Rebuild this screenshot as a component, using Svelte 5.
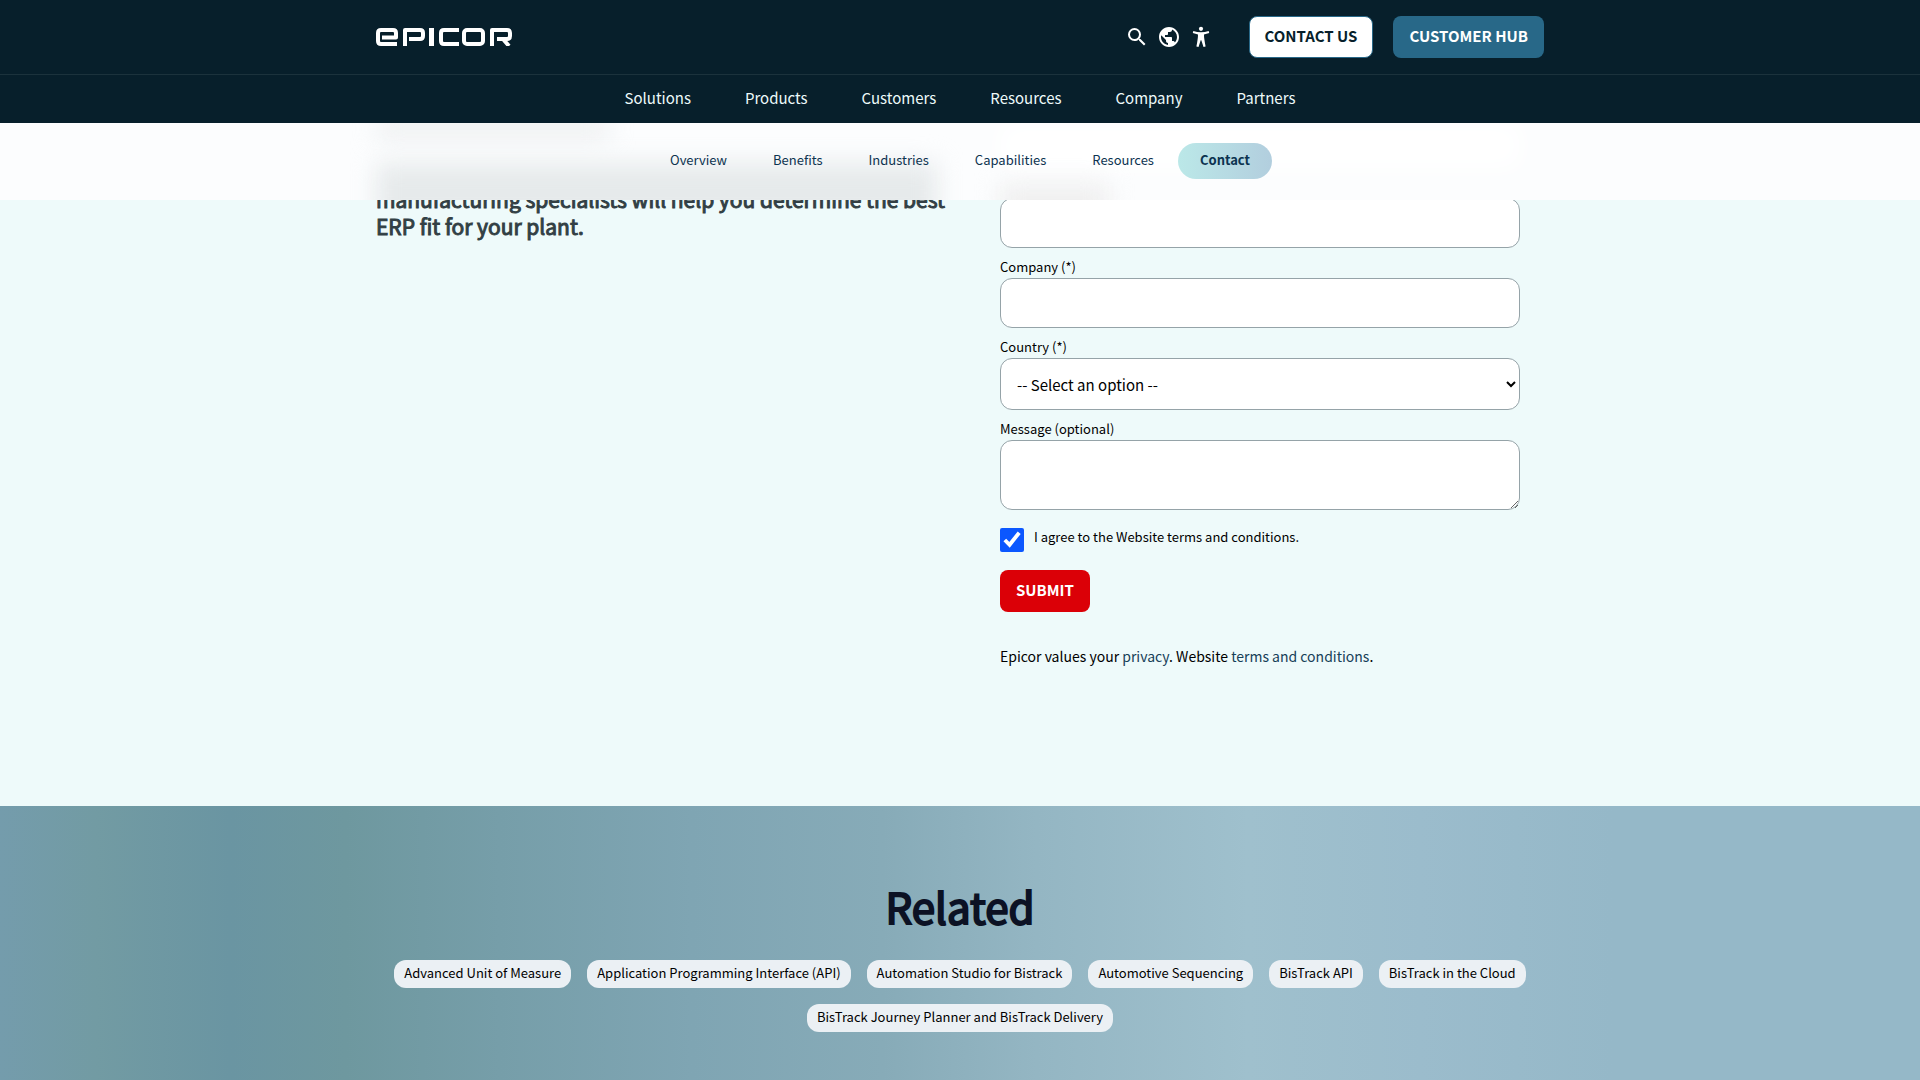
<script>
  const mainLinks = ['Solutions', 'Products', 'Customers', 'Resources', 'Company', 'Partners'];
  const pageLinks = ['Overview', 'Benefits', 'Industries', 'Capabilities', 'Resources', 'Contact'];
  const tags = [
    'Advanced Unit of Measure',
    'Application Programming Interface (API)',
    'Automation Studio for Bistrack',
    'Automotive Sequencing',
    'BisTrack API',
    'BisTrack in the Cloud',
    'BisTrack Journey Planner and BisTrack Delivery'
  ];
  let agreed = $state(true);
</script>

<header class="top">
  <div class="masthead">
    <div class="container bar">
      <a class="logo" href="#home" aria-label="Epicor">
        <svg viewBox="0 0 136 18" width="136" height="18" fill="none" stroke="#fff" stroke-width="4" stroke-linejoin="round">
          <path d="M6 9.500H20V5Q20 2 17 2H5Q2 2 2 5V13Q2 16 5 16H21" />
          <path d="M29 18V2H44Q47 2 47 5V8Q47 11 44 11H33" />
          <path stroke-width="5" d="M55.500 0V18" />
          <path d="M83 2H68Q65 2 65 5V13Q65 16 68 16H83" />
          <rect x="88" y="2" width="19" height="14" rx="3" />
          <path d="M116 18V2H131Q134 2 134 5V8Q134 11 131 11H121M127 11L133 18" />
        </svg>
      </a>
      <div class="actions">
        <div class="tools">
          <button class="tool" type="button" aria-label="Search">
            <svg viewBox="0 0 24 24" width="24" height="24"><path d="M15.500 14h-.79l-.28-.27A6.471 6.471 0 0 0 16 9.500 6.500 6.500 0 1 0 9.500 16c1.610 0 3.090-.59 4.230-1.570l.27.28v.79l5 4.990L20.490 19l-4.990-5zm-6 0C7.010 14 5 11.990 5 9.500S7.010 5 9.500 5 14 7.010 14 9.500 11.990 14 9.500 14z" /></svg>
          </button>
          <button class="tool" type="button" aria-label="Language">
            <svg viewBox="0 0 24 24" width="24" height="24"><path d="M12 2C6.480 2 2 6.480 2 12s4.480 10 10 10 10-4.480 10-10S17.520 2 12 2zm-1 17.930c-3.950-.49-7-3.850-7-7.930 0-.62.080-1.210.21-1.790L9 15v1c0 1.100.9 2 2 2v1.930zm6.900-2.540c-.26-.81-1-1.390-1.900-1.390h-1v-3c0-.55-.45-1-1-1H8v-2h2c.55 0 1-.45 1-1V7h2c1.100 0 2-.9 2-2v-.41c2.930 1.190 5 4.060 5 7.410 0 2.080-.8 3.970-2.100 5.390z" /></svg>
          </button>
          <button class="tool" type="button" aria-label="Accessibility">
            <svg viewBox="0 0 24 24" width="24" height="24"><circle cx="12" cy="3.800" r="2.100" /><path d="M4.300 6.100Q12 8.600 19.700 6.100L20.200 8.100Q17.500 9.100 15 9.500Q14.900 13 16.600 21.400L14.500 22L12.300 15.200H11.700L9.500 22L7.400 21.400Q9.100 13 9 9.500Q6.500 9.100 3.800 8.100Z" /></svg>
          </button>
        </div>
        <div class="ctas">
          <a class="btn light" href="#contact">CONTACT US</a>
          <a class="btn blue" href="#hub">CUSTOMER HUB</a>
        </div>
      </div>
    </div>
  </div>
  <nav class="main-nav" aria-label="Main">
    {#each mainLinks as link}
      <a href="#{link.toLowerCase()}">{link}</a>
    {/each}
  </nav>
  <nav class="page-nav" aria-label="On this page">
    <!-- Frosted tint of the content scrolled behind the bar -->
    <div class="frost" aria-hidden="true">
      <div class="container columns">
        <div class="frost-intro"><i class="title"></i><i class="line"></i></div>
        <div class="frost-form"><i class="field"></i><i class="caption"></i></div>
      </div>
    </div>
    {#each pageLinks as link}
      <a class:active={link === 'Contact'} href="#{link.toLowerCase()}">{link}</a>
    {/each}
  </nav>
</header>

<main>
  <section class="contact" id="contact">
    <div class="container columns">
      <p class="intro">manufacturing specialists will help you determine the best ERP fit for your plant.</p>
      <form onsubmit={(e) => e.preventDefault()}>
        <input class="box" type="tel" aria-label="Phone" />
        <label for="company">Company (*)</label>
        <input class="box" id="company" type="text" />
        <label for="country">Country (*)</label>
        <select class="box" id="country">
          <option>-- Select an option --</option>
        </select>
        <label for="message">Message (optional)</label>
        <textarea class="box" id="message"></textarea>
        <div class="agree">
          <input id="agree" type="checkbox" bind:checked={agreed} />
          <label for="agree">I agree to the Website terms and conditions.</label>
        </div>
        <button class="btn submit" type="submit">SUBMIT</button>
        <p class="legal">Epicor values your <a href="#privacy">privacy</a>. Website <a href="#terms">terms and conditions</a>.</p>
      </form>
    </div>
  </section>

  <section class="related">
    <h2>Related</h2>
    <ul class="container">
      {#each tags as tag}
        <li><a href="#related">{tag}</a></li>
      {/each}
    </ul>
  </section>
</main>

<style>
  :global(body) {
    background: #eefafa;
    color: #000;
    font-family: 'Noto Sans CJK SC', 'Noto Sans', sans-serif;
    font-size: 15px;
    line-height: 24px;
  }
  :global(*) {
    box-sizing: border-box;
  }
  a {
    text-decoration: none;
  }
  .container {
    width: 100%;
    max-width: 1200px;
    margin: 0 auto;
    padding: 0 16px;
  }
  .columns {
    display: grid;
    grid-template-columns: 1fr 1fr;
  }

  .top {
    position: fixed;
    inset: 0 0 auto;
    z-index: 2;
  }
  .masthead {
    background: #071f2b;
    border-bottom: 1px solid #1b323c;
  }
  .bar {
    display: flex;
    justify-content: space-between;
    align-items: center;
    padding-top: 16px;
    padding-bottom: 16px;
  }
  .logo,
  .logo svg,
  .tool svg {
    display: block;
  }
  .actions {
    display: flex;
    align-items: center;
    gap: 36px;
  }
  .tools {
    display: flex;
    gap: 8px;
  }
  .tool {
    padding: 0;
    border: 0;
    background: none;
    fill: #fff;
    cursor: pointer;
  }
  .ctas {
    display: flex;
    gap: 20px;
  }
  .btn {
    display: inline-block;
    padding: 7px 15px 9px;
    border: 1px solid transparent;
    border-radius: 8px;
    font: 700 15px/24px 'Noto Sans CJK SC', 'Noto Sans', sans-serif;
    color: #fff;
    cursor: pointer;
  }
  .light {
    background: #fff;
    border-color: #286888;
    color: #071f2b;
  }
  .blue {
    background: #286888;
  }
  .main-nav {
    display: flex;
    justify-content: center;
    gap: 54px;
    padding: 11px 16px 13px;
    background: #071f2b;
  }
  .main-nav a {
    color: #edfafa;
  }
  .page-nav {
    position: relative;
    display: flex;
    justify-content: center;
    gap: 2px;
    padding: 20px 16px 21px;
    background: #fcfdfe;
  }
  .page-nav a {
    position: relative;
    padding: 5px 22px 7px;
    border-radius: 18px;
    font-size: 13px;
    color: #0c3350;
  }
  .page-nav .active {
    background: linear-gradient(90deg, #bbe8e8, #b2cede);
    font-weight: 700;
  }
  .frost {
    position: absolute;
    inset: 0;
    overflow: hidden;
  }
  .frost-form {
    padding: 0 24px 0 40px;
  }
  .frost i {
    display: block;
    filter: blur(12px);
  }
  .frost .title {
    width: 40%;
    height: 12px;
    margin-bottom: 28px;
    background: #e4e7e8;
  }
  .frost .line {
    width: 96%;
    height: 60px;
    background: #e6eaeb;
  }
  .frost .field {
    height: 45px;
    margin-bottom: 16px;
    background: #fff;
  }
  .frost .caption {
    width: 21%;
    height: 40px;
    background: #efefef;
  }

  .contact {
    padding: 186px 0 138px;
  }
  .intro {
    margin: 0;
    font-size: 21px;
    line-height: 27px;
    color: #323f44;
    -webkit-text-stroke: 1px currentColor;
  }
  form {
    padding: 12px 24px 0 40px;
  }
  form > label {
    display: block;
    padding: 8px 0 0;
    font-size: 13px;
    line-height: 22px;
  }
  .box {
    display: block;
    width: 100%;
    height: 50px;
    padding: 0 16px;
    border: 1px solid #95a3a8;
    border-radius: 12px;
    background: #fff;
    font: inherit;
    color: #000;
  }
  select.box {
    height: 52px;
    padding: 0 0 0 12px;
  }
  textarea.box {
    height: 70px;
    resize: vertical;
  }
  .agree {
    display: flex;
    gap: 10px;
    margin: 18px 0;
    font-size: 13px;
    line-height: 18px;
  }
  .agree input {
    width: 24px;
    height: 24px;
    margin: 0;
    accent-color: #0b57ff;
  }
  .submit {
    display: block;
    background: #db0007;
  }
  .legal {
    margin: 32px 0 0;
    font-size: 14px;
  }
  .legal a {
    color: #164058;
  }

  .related {
    padding: 70px 0 48px;
    background: linear-gradient(
      90deg,
      #749cac 0%,
      #729ba3 5%,
      #6a95a2 12%,
      #6e989f 18%,
      #769ea9 26%,
      #7fa5b3 36%,
      #87abb8 46%,
      #94b6c3 54%,
      #9fc0cd 65%,
      #9bbccc 74%,
      #95b8c8 84%,
      #95b8c8 100%
    );
    text-align: center;
  }
  .related h2 {
    margin: 0 0 24px;
    font-size: 42px;
    font-weight: 400;
    line-height: 60px;
    color: #0c1224;
    -webkit-text-stroke: 2px currentColor;
  }
  .related ul {
    display: flex;
    flex-wrap: wrap;
    justify-content: center;
    gap: 16px;
    list-style: none;
  }
  .related a {
    display: block;
    padding: 3px 10px 5px;
    border-radius: 12px;
    background: #ebf0f4;
    font-size: 13px;
    line-height: 20px;
    color: #000;
  }
</style>
